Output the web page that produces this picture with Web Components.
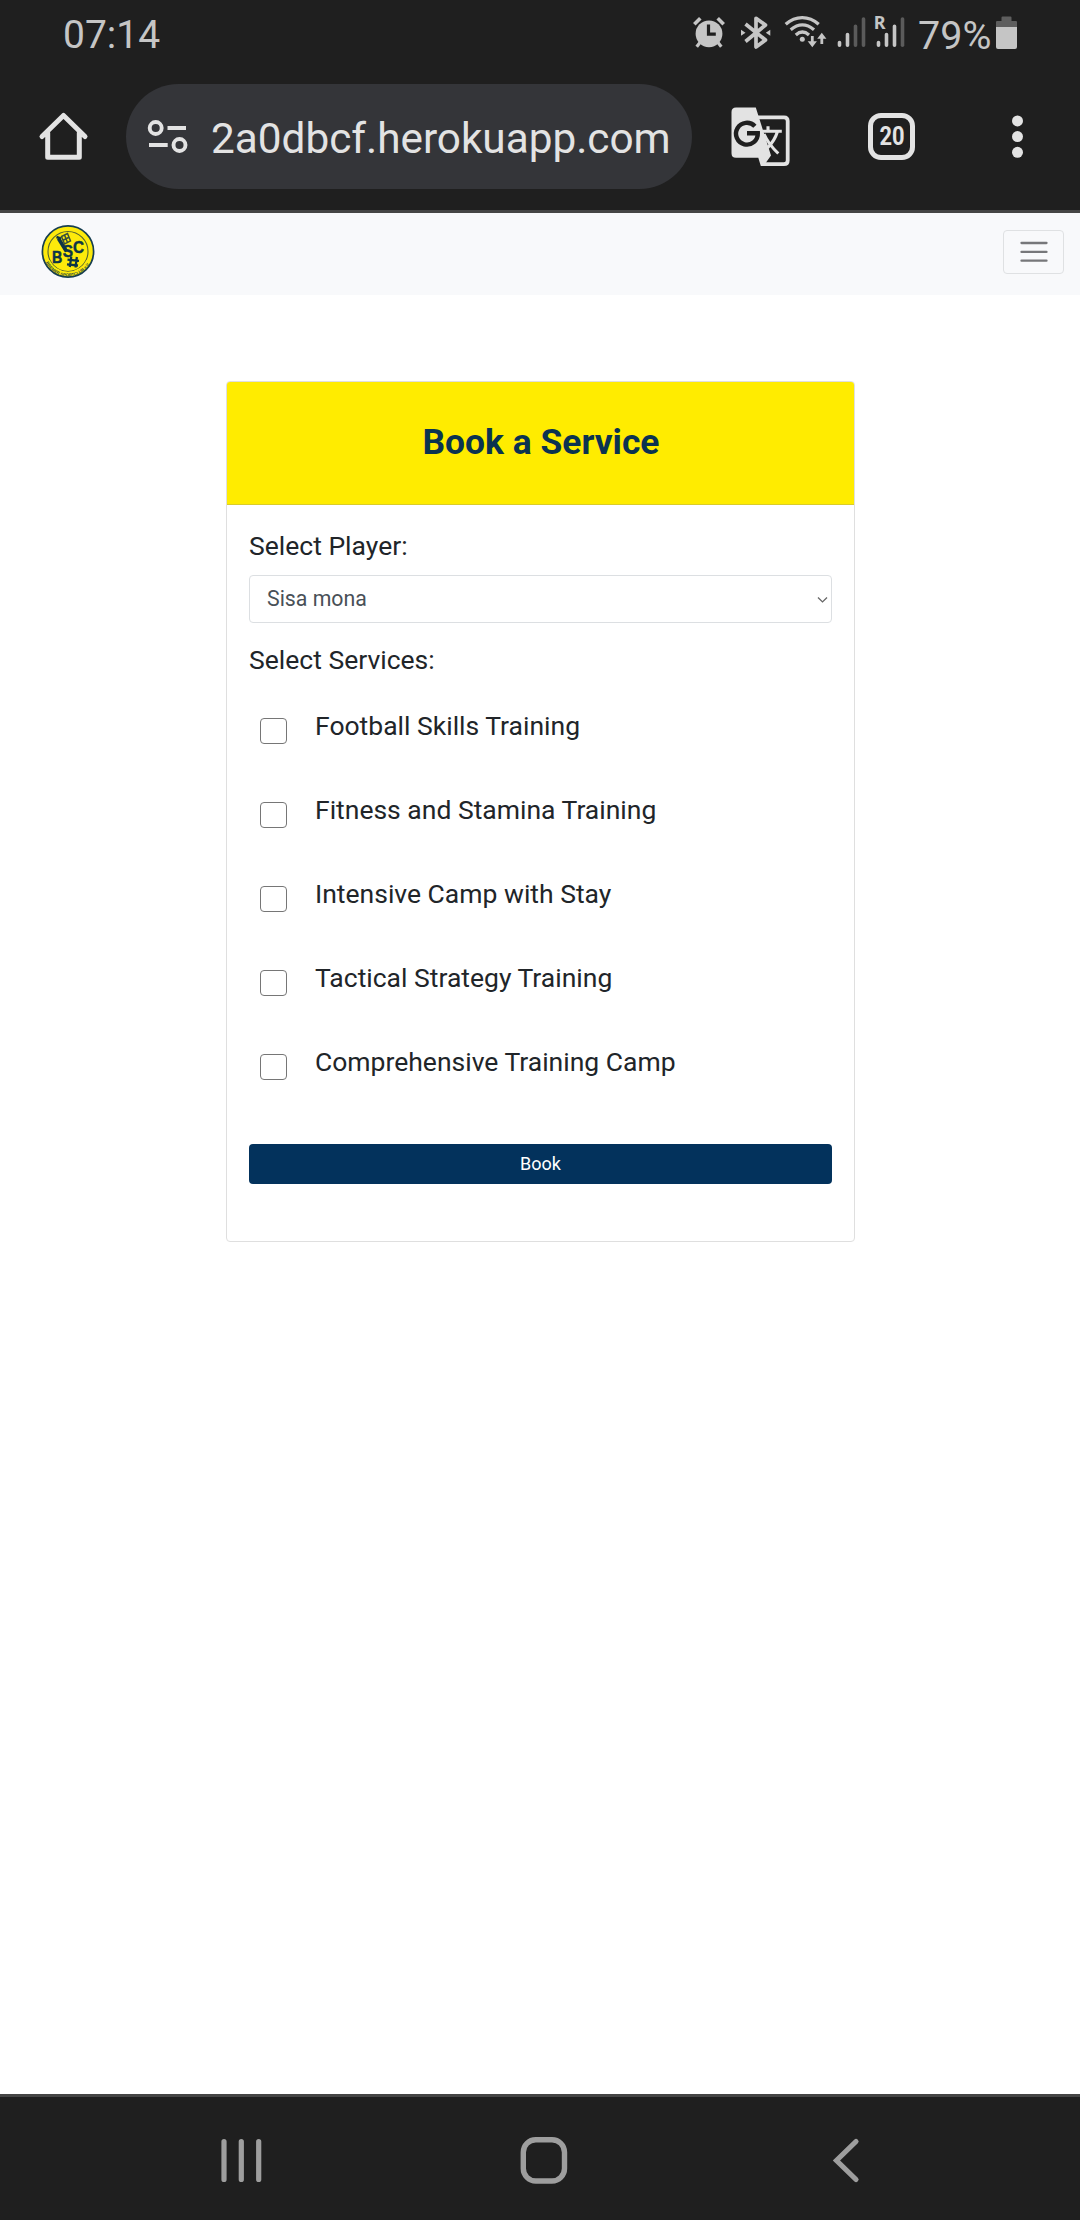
<!DOCTYPE html>
<html lang="en">
<head>
<meta charset="utf-8">
<title>Book a Service</title>
<style>
html,body{margin:0;padding:0}
body{font-family:Roboto,"Liberation Sans",sans-serif;background:#fff;color:#212529}
</style>
</head>
<body>
<booking-screen></booking-screen>
<script>
const define=(name,html,setup)=>customElements.define(name,class extends HTMLElement{
  connectedCallback(){
    if(this.shadowRoot)return;
    const t=document.createElement('template');
    t.innerHTML=html;
    this.attachShadow({mode:'open'}).append(t.content.cloneNode(true));
    if(setup)setup(this,this.shadowRoot);
  }
});

/* Icon drawings: [viewBox, markup]. The viewBox size is the drawn size in pixels. */
const ICONS={
alarm:['692 16 34 33','<circle cx="709" cy="33.8" r="13.4" fill="currentColor"/><path d="M694.3 24.3l6-6M723.7 24.3l-6-6" stroke="currentColor" stroke-width="3.6"/><path d="M700 42.500l-3.300 4.300M718 42.500l3.300 4.300" stroke="currentColor" stroke-width="3.200"/><path d="M708.500 24.500v9.700h7.300" stroke="#1f1f1f" stroke-width="3.200" fill="none"/>'],
bluetooth:['740 15 32 35','<path d="M745.500 24l20 16-9.500 7V18.300l9.500 6.700-20 16.500" fill="none" stroke="currentColor" stroke-width="3.700" stroke-linejoin="round"/><path d="M741 29.800l4.500 3-4.500 3zM770.300 29.800l-4.500 3 4.500 3z" fill="currentColor"/>'],
wifi:['784 14 44 35','<g fill="none" stroke="currentColor" stroke-width="3.300"><path d="M785.700 24.300c10-8.900 23-8.900 33 0"/><path d="M790.700 29.800c7.500-6.300 15.800-6.300 23.300 0"/><path d="M795.800 35c4.200-3.700 9-3.700 13.200 0"/></g><circle cx="802.300" cy="39.200" r="2.500" fill="currentColor"/><path d="M812.300 36v8M821.800 44v-8" stroke="currentColor" stroke-width="2.800"/><path d="M807.700 41.300h9.200l-4.600 6zM817.200 38.700h9.200l-4.600-6z" fill="currentColor"/>'],
signal:['837 14 29 35','<g stroke="currentColor" stroke-width="3.600" stroke-linecap="round"><path d="M839.500 42.500v2.800M847.500 34.500v10.800"/><path d="M855.500 26.300v19M863.500 19v26.300" stroke="#5b5b5b"/></g>'],
roaming:['874 14 31 35','<text x="873.8" y="28.900" font-family="Noto Sans,Roboto,sans-serif" font-weight="700" font-size="18" fill="currentColor">R</text><g stroke="currentColor" stroke-width="3.600" stroke-linecap="round"><path d="M878.500 42.500v2.800M886.500 34.500v10.800M894.500 26.300v19"/><path d="M902.500 19v26.300" stroke="#5b5b5b"/></g>'],
battery:['996 16 21 33','<path d="M1002.500 16.500h8q1 0 1 1V21h4.500q1 0 1 1v5h-21v-5q0-1 1-1h4.500v-3.500q0-1 1-1z" fill="#5e5e5e"/><path d="M996 27h21v20q0 2-2 2h-17q-2 0-2-2z" fill="currentColor"/>'],
home:['38 111 51 51','<path d="M42 136.500L63.500 115.500 85 136.500M47.700 133v24.300h31.600V133" fill="none" stroke="currentColor" stroke-width="5" stroke-linecap="round" stroke-linejoin="round"/>'],
tune:['147 119 42 36','<g fill="none" stroke="currentColor" stroke-width="3.900"><circle cx="155.700" cy="128" r="6"/><circle cx="179.500" cy="145" r="6"/><path d="M167.500 128H186M149 145h18.700"/></g>'],
translate:['730 106 62 62','<path d="M756 117.300h28q3.700 0 3.700 3.700v39.500q0 3.700-3.700 3.700H762" fill="none" stroke="currentColor" stroke-width="3.800"/><path d="M736 107.500H755.800L771 155.500l-7.500 10.500H760.800L758.300 157.800H736q-4.500 0-4.500-4.500V112q0-4.500 4.500-4.500z" fill="currentColor"/><path d="M754.900 126.300a10.900 10.900 0 1 0 2.900 6.900H747" fill="none" stroke="#1f1f1f" stroke-width="4.400"/><path d="M762.500 131.200h19.300M768 126.300v5M777.500 131.500c-2 6.500-5 11.500-10 16.300M764 134c3.500 8 8 13.500 14.300 19.500" fill="none" stroke="currentColor" stroke-width="3.100"/>'],
dots:['1011 115 13 44','<g fill="currentColor"><circle cx="1017.500" cy="120.900" r="5.500"/><circle cx="1017.500" cy="136.600" r="5.500"/><circle cx="1017.500" cy="152.300" r="5.500"/></g>'],
menu:['1020 240 28 24','<path d="M1021.500 243h25M1021.500 251.900h25M1021.500 260.700h25" stroke="#76777a" stroke-width="2.300" stroke-linecap="round"/>'],
chevron:['818 594 11 9','<path d="M819 596.500l4.500 4.400 4.500-4.400" fill="none" stroke="#666" stroke-width="1.300"/>'],
recents:['220 2138 43 45','<path d="M224 2141.500v38M241.300 2141.500v38M258.700 2141.500v38" stroke="currentColor" stroke-width="5.200" stroke-linecap="round"/>'],
homekey:['519 2136 50 50','<rect x="523.300" y="2139.800" width="41.200" height="41.200" rx="12.500" fill="none" stroke="currentColor" stroke-width="5.400"/>'],
back:['831 2137 30 47','<path d="M856 2141.500L836.500 2160.500 856 2179.500" fill="none" stroke="currentColor" stroke-width="5.200" stroke-linecap="round"/>'],
logo:['41 224 54 55','<circle cx="68" cy="251.500" r="25.600" fill="#fdea0b" stroke="#173f50" stroke-width="1.700"/><circle cx="68" cy="251.500" r="20" fill="none" stroke="#55652f" stroke-width="1.100"/><path d="M46.500 261.500q5 13.500 21.500 14.500 16-.5 21.500-14.500l-3-1.500q-5 10.500-18.500 11.800-13-.8-18.500-11.800z" fill="#fdea0b"/><path d="M58.5 238.500l8 13" stroke="#0d3547" stroke-width="3.600"/><path d="M56.500 237l4.600 1.700" stroke="#0d3547" stroke-width="2.500"/><path d="M61.500 236.500l6-3 3 7.500-6 3zM63.500 240l6-3M64.500 235l3 7.500" fill="none" stroke="#384f3c" stroke-width="1.500"/><g fill="#0d3547" stroke="#0d3547" stroke-width=".5" font-family="Liberation Sans,sans-serif" font-weight="700"><text x="52.100" y="262.800" font-size="16.500" textLength="10.300" lengthAdjust="spacingAndGlyphs">B</text><text x="62.700" y="257" font-size="17" textLength="10.300" lengthAdjust="spacingAndGlyphs">S</text><text x="73" y="253" font-size="16.500" textLength="11" lengthAdjust="spacingAndGlyphs">C</text></g><path d="M71.3 256.500l-1.500 10.500M76.900 257l-1.500 10.500M67.500 259.700l11.500 1.200M67 264.300l11 1.200" stroke="#0d3547" stroke-width="2.300"/><path id="ring" d="M45.700 262.500A24.800 24.800 0 0 0 90.300 262.500" fill="none"/><text font-family="Liberation Sans,sans-serif" font-weight="700" font-size="4.300" fill="#2d4a3c"><textPath href="#ring" textLength="54">BREMER SPORTCLUB e.V.</textPath></text>']
};
define('ui-icon','<style>:host{display:block;flex:none}svg{display:block;overflow:visible}</style>',(el,root)=>{
  const [box,body]=ICONS[el.getAttribute('name')],[,,w,h]=box.split(' ');
  const holder=document.createElement('div');
  holder.innerHTML=`<svg viewBox="${box}" width="${w}" height="${h}">${body}</svg>`;
  root.append(holder);
});

define('status-bar',`<style>
:host{display:flex;height:69px;align-items:flex-start;color:#c5c5c5;font-size:39px;line-height:71px}
.time{margin-left:63px;flex:1}
.tray{display:flex;align-items:flex-start;padding-right:63px}
.pct{font-size:39.5px}
</style><span class="time">07:14</span>
<div class="tray"><ui-icon name="alarm" style="margin-top:16px"></ui-icon><ui-icon name="bluetooth" style="margin:15px 0 0 14px"></ui-icon><ui-icon name="wifi" style="margin:14px 0 0 12px"></ui-icon><ui-icon name="signal" style="margin:14px 0 0 9px"></ui-icon><ui-icon name="roaming" style="margin:14px 0 0 8px"></ui-icon><span class="pct" style="margin-left:13px;width:78px">79%</span><ui-icon name="battery" style="margin-top:16px"></ui-icon></div>`);

define('browser-bar',`<style>
:host{display:flex;height:141px;box-sizing:border-box;padding-top:15px;align-items:flex-start;color:#e3e3e3}
.pill{display:flex;box-sizing:border-box;width:566px;height:105px;border-radius:52.5px;background:#343539;margin-left:37px;padding:0 20px 0 21px;align-items:center}
.url{margin-left:22px;font-size:42.3px;line-height:50px;padding-top:5px;white-space:nowrap}
.tabs{box-sizing:border-box;width:47px;height:47px;border:5px solid;border-radius:13px;margin:29px 0 0 76px;display:flex;align-items:center;justify-content:center;font:700 26px/37px Roboto,sans-serif}
.tabs span{display:block;transform:scaleX(.84)}
</style><ui-icon name="home" style="margin:27px 0 0 38px"></ui-icon>
<div class="pill"><ui-icon name="tune"></ui-icon><span class="url">2a0dbcf.herokuapp.com</span></div>
<ui-icon name="translate" style="margin:22px 0 0 38px"></ui-icon>
<div class="tabs"><span>20</span></div>
<ui-icon name="dots" style="margin:31px 0 0 96px"></ui-icon>`);

define('site-nav',`<style>
:host{display:flex;justify-content:space-between;height:82px;background:#f8f9fb;border-top:3px solid #454545}
.toggle{box-sizing:border-box;width:61px;height:44px;border:1px solid #dfe1e3;border-radius:4px;margin:17px 16px 0 0;display:flex;align-items:center;justify-content:center}
</style><ui-icon name="logo" style="margin:11px 0 0 41px"></ui-icon><div class="toggle"><ui-icon name="menu"></ui-icon></div>`);

define('player-select',`<style>
:host{display:flex;box-sizing:border-box;height:48px;border:1.500px solid #dcdfe2;border-radius:4px;padding:0 3.500px 0 17px;align-items:center;justify-content:space-between;color:#495057;font-size:21.3px;line-height:43px}
span{padding-bottom:2px}
</style><span><slot></slot></span><ui-icon name="chevron"></ui-icon>`);

define('service-option',`<style>
:host{display:flex;height:84px;align-items:flex-start}
.box{box-sizing:border-box;width:27px;height:26px;border:1.500px solid #767676;border-radius:4px;margin:12px 28px 0 11px}
span{font-size:26.5px;line-height:40px}
</style><div class="box"></div><span><slot></slot></span>`);

define('booking-card',`<style>
:host{display:block;box-sizing:border-box;width:629px;height:861px;border:1px solid #dfdfdf;border-radius:4px;overflow:hidden;margin:86px auto 0 226px}
header{height:122px;background:#ffec00;border-bottom:1px solid #d9cc2b;display:flex;align-items:center;justify-content:center;color:#0b3350;font-weight:700;font-size:35.4px;line-height:42px}
header span{padding:0 0 3px 1px}
main{padding:21px 22px 0}
label{display:block;font-size:26.5px;line-height:40px;white-space:nowrap}
.list{margin-top:26px}
button{display:block;width:100%;height:40px;border:0;border-radius:4px;background:#03325c;color:#fff;font:400 18px/40px Roboto,sans-serif;margin:18px 0 0;padding:0}
</style><header><span>Book a Service</span></header><main>
<label>Select Player:</label><player-select style="margin:9px 0 17px">Sisa mona</player-select>
<label>Select Services:</label>
<div class="list"><service-option>Football Skills Training</service-option><service-option>Fitness and Stamina Training</service-option><service-option>Intensive Camp with Stay</service-option><service-option>Tactical Strategy Training</service-option><service-option>Comprehensive Training Camp</service-option></div>
<button>Book</button></main>`);

define('android-nav',`<style>
:host{display:flex;box-sizing:border-box;height:126px;background:#1f1f1f;border-top:3px solid #454545;color:#9e9e9e;align-items:flex-start}
</style><ui-icon name="recents" style="margin:41px 0 0 220px"></ui-icon><ui-icon name="homekey" style="margin:39px 0 0 256px"></ui-icon><ui-icon name="back" style="margin:40px 0 0 262px"></ui-icon>`);

define('booking-screen',`<style>
:host{display:flex;flex-direction:column;width:1080px;height:2220px;overflow:hidden;background:#fff}
.top{background:#1f1f1f}
.page{flex:1}
</style><div class="top"><status-bar></status-bar><browser-bar></browser-bar></div><site-nav></site-nav><div class="page"><booking-card></booking-card></div><android-nav></android-nav>`);
</script>
</body>
</html>
